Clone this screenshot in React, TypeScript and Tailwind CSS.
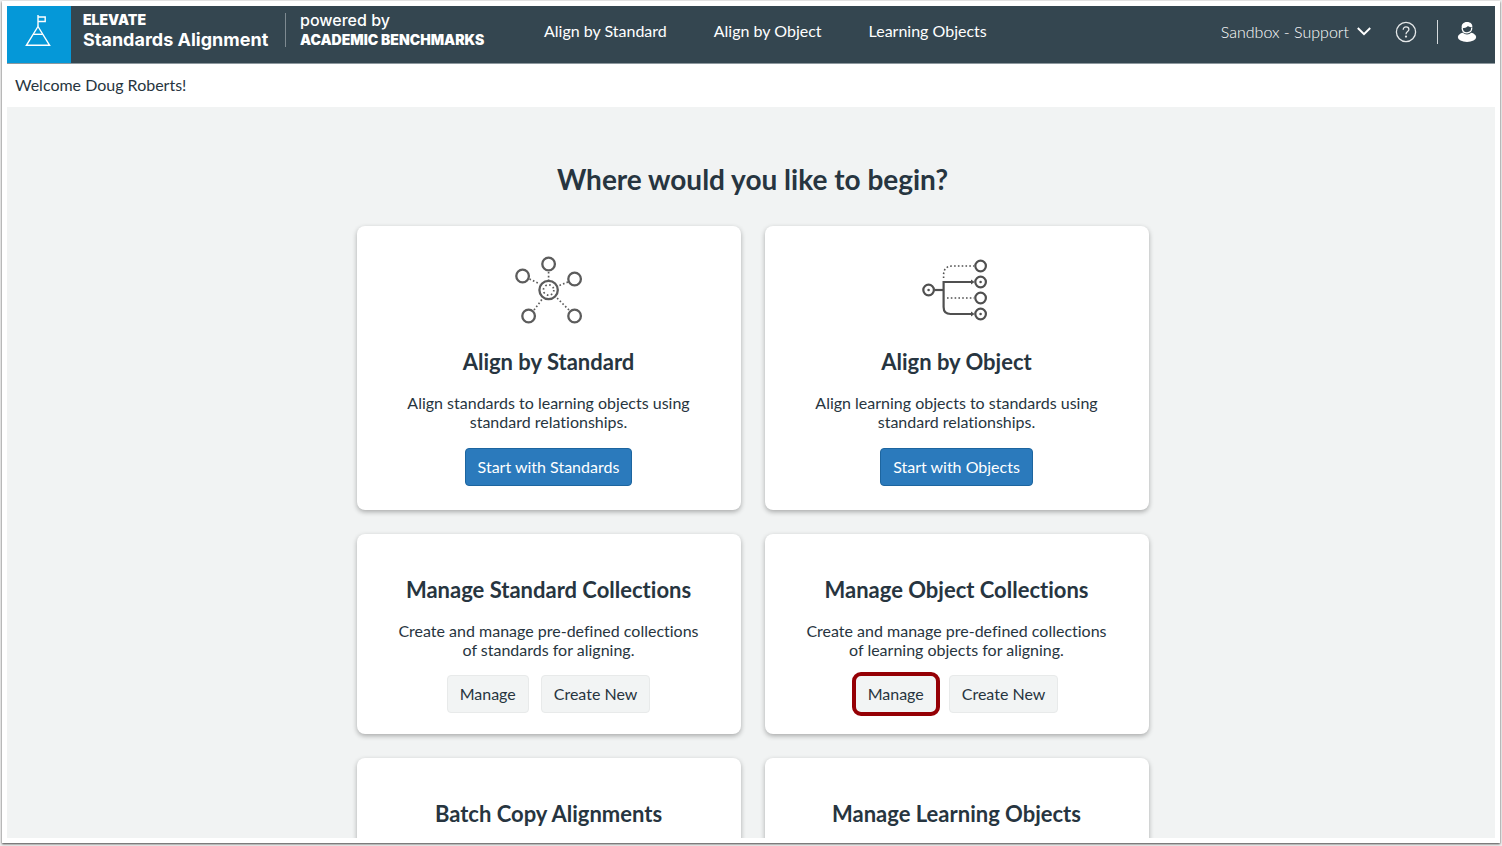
import type { ReactNode } from "react";

function LogoMark() {
  return (
    <svg width="26" height="34" viewBox="0 0 26 34" fill="none" stroke="#fff" strokeWidth="1.4" aria-hidden="true">
      <path d="M13 12.5 L24.6 31.3 H1.4 Z" />
      <path d="M13 12.5 V1" />
      <path d="M13 3 H20.2 V7.5 H13" />
      <path d="M8.2 20.3 H17.8" />
    </svg>
  );
}

function UserIcon() {
  return (
    <svg width="20" height="22" viewBox="0 0 20 22" aria-hidden="true">
      <ellipse cx="10" cy="16" rx="9.2" ry="5.1" fill="#fff" />
      <circle cx="10" cy="7" r="6.4" fill="#344650" />
      <path d="M4.8 7.2 C4 3.4 6.4 1 10 1 C13.6 1 15.8 3.2 15.3 6 C13.4 6.4 11.9 5.9 11 5 C9.4 6.6 7.2 7.3 4.8 7.2 Z" fill="#fff" />
      <path d="M5.2 7 C5.2 10.2 7.4 11.9 10 11.9 C12.6 11.9 14.8 10.2 14.8 6.6" fill="none" stroke="#fff" strokeWidth="1.3" />
    </svg>
  );
}

function HubIcon() {
  return (
    <svg width="80" height="80" viewBox="0 0 80 80" fill="none" stroke="#5c5c5c" aria-hidden="true">
      <g strokeWidth="2.3">
        <circle cx="39.6" cy="14" r="6.3" />
        <circle cx="13.6" cy="26" r="6.3" />
        <circle cx="65.6" cy="29" r="6.3" />
        <circle cx="19.6" cy="66" r="6.3" />
        <circle cx="65.6" cy="66" r="6.3" />
        <circle cx="39.6" cy="40" r="9.2" />
      </g>
      <circle cx="39.6" cy="40" r="5.2" strokeWidth="1.7" strokeDasharray="1.6 2.48" />
      <g strokeWidth="1.7" strokeDasharray="1.6 2.2">
        <path d="M39.6 22 V30" />
        <path d="M20.5 29 L31 34" />
        <path d="M59 32 L49 36" />
        <path d="M25 60 L34 48" />
        <path d="M60 60 L47 47" />
      </g>
    </svg>
  );
}

function TreeIcon() {
  return (
    <svg width="80" height="80" viewBox="0 0 80 80" fill="none" stroke="#505050" aria-hidden="true">
      <g strokeWidth="2.2">
        <circle cx="11.6" cy="40" r="5.3" />
        <circle cx="63.6" cy="16" r="5.3" />
        <circle cx="63.6" cy="32" r="5.3" />
        <circle cx="63.6" cy="48" r="5.3" />
        <circle cx="63.6" cy="64" r="5.3" />
        <path d="M17.5 40 H26.6" />
        <path d="M56 32 H26.6 V57 Q26.6 64 33.6 64 H56" />
      </g>
      <path d="M26.6 28 V25 Q26.6 16 35.6 16 H57 M30 48 H57" strokeWidth="1.6" strokeDasharray="1.6 2.2" />
      <g fill="#505050" stroke="none">
        <circle cx="11.6" cy="40" r="1.3" />
        <circle cx="63.6" cy="32" r="1.3" />
        <circle cx="63.6" cy="64" r="1.3" />
        <path d="M54 29.5 L57.6 32 L54 34.5 Z M54 61.5 L57.6 64 L54 66.5 Z" />
      </g>
    </svg>
  );
}

type CardProps = { title: string; lines: [string, string]; icon?: ReactNode; children?: ReactNode };

function Card({ title, lines, icon, children }: CardProps) {
  return (
    <section
      className={`flex flex-col items-center rounded-lg bg-white px-6 text-center shadow-[0_2px_5px_rgba(0,0,0,0.3)] ${
        icon ? "pt-6 pb-6" : "pt-[42px] pb-[21px]"
      }`}
    >
      {icon && <div className="mb-[18px]">{icon}</div>}
      <h2 className="text-[22px] leading-7 font-bold">{title}</h2>
      <p className="mt-[17px] leading-[19px]">
        {lines[0]}
        <br />
        {lines[1]}
      </p>
      <div className={`flex gap-3 ${icon ? "mt-[17px]" : "mt-4"}`}>{children}</div>
    </section>
  );
}

function PrimaryButton({ children }: { children: ReactNode }) {
  return (
    <button type="button" className="h-[38px] rounded border border-[#1d659f] bg-[#2b7abc] px-3 text-white">
      {children}
    </button>
  );
}

function PlainButton({ children, highlighted = false }: { children: ReactNode; highlighted?: boolean }) {
  return (
    <button
      type="button"
      className={`h-[38px] border border-[#e8eaea] bg-[#f2f4f4] px-3 ${
        highlighted ? "rounded-md outline-4 -outline-offset-1 outline-[#950005]" : "rounded"
      }`}
    >
      {children}
    </button>
  );
}

function ManageActions({ highlighted = false }: { highlighted?: boolean }) {
  return (
    <>
      <PlainButton highlighted={highlighted}>Manage</PlainButton>
      <PlainButton>Create New</PlainButton>
    </>
  );
}

export default function App() {
  return (
    <div className="h-screen bg-[#eeeeee] px-0.5 pt-px pb-[3px] font-['Lato',sans-serif] text-base text-[#273540] [font-variant-ligatures:none]">
      <div className="flex h-full flex-col bg-white p-[5px] shadow-[0_1px_2px_rgba(0,0,0,0.7)]">
        <header className="flex h-[58px] shrink-0 items-stretch border-b border-[#8d989e] bg-[#344650] text-white">
          <a href="#home" aria-label="Elevate home" className="flex w-16 items-start justify-center bg-[#0598d8] pt-2 pr-0.5">
            <LogoMark />
          </a>
          <div className="flex pl-3 font-['Inter',sans-serif]">
            <div className="flex w-[202px] flex-col pt-1 whitespace-nowrap">
              <span className="text-sm leading-5 font-black">ELEVATE</span>
              <span className="text-lg leading-5 font-bold">Standards Alignment</span>
            </div>
            <div className="mt-[7px] h-[34px] w-px bg-[#7e8a91]" />
            <div className="flex w-[258px] flex-col pt-1 pl-3.5 whitespace-nowrap">
              <span className="text-base leading-5 font-medium">powered by</span>
              <span className="text-sm leading-5 font-black">ACADEMIC BENCHMARKS</span>
            </div>
          </div>
          <nav className="flex gap-[47px] pt-[15px] leading-5 whitespace-nowrap">
            <a href="#standard">Align by Standard</a>
            <a href="#object">Align by Object</a>
            <a href="#learning">Learning Objects</a>
          </nav>
          <div className="ml-auto flex h-[51px] items-center pr-[18px]">
            <button type="button" className="flex items-center gap-2 font-light whitespace-nowrap">
              Sandbox - Support
              <svg width="14" height="9" viewBox="0 0 14 9" fill="none" stroke="#fff" strokeWidth="2" aria-hidden="true">
                <path d="M0.8 1 L7 7.2 L13.2 1" />
              </svg>
            </button>
            <button type="button" aria-label="Help" className="ml-6">
              <svg width="22" height="22" viewBox="0 0 22 22" fill="none" stroke="#e6e9ea" strokeWidth="1.3" aria-hidden="true">
                <circle cx="11" cy="11" r="9.6" />
                <path d="M8.2 8.8 C8.2 6.9 9.4 5.8 11 5.8 C12.7 5.8 13.9 6.9 13.9 8.4 C13.9 10.5 11 10.5 11 13.2" />
                <circle cx="11" cy="15.6" r="0.5" fill="#e6e9ea" />
              </svg>
            </button>
            <div className="ml-5 h-6 w-px bg-[#d5dadd]" />
            <button type="button" aria-label="Account" className="ml-[19px]">
              <UserIcon />
            </button>
          </div>
        </header>

        <p className="h-[43px] shrink-0 px-2 pt-[11px] leading-5">Welcome Doug Roberts!</p>

        <main className="min-h-0 flex-1 overflow-hidden bg-[#f1f3f3] pt-[54px] pl-[3px]">
          <h1 className="text-center text-[28px] leading-9 font-bold">Where would you like to begin?</h1>
          <div className="mx-auto mt-[29px] grid max-w-[792px] grid-cols-2 gap-6">
            <Card
              title="Align by Standard"
              lines={["Align standards to learning objects using", "standard relationships."]}
              icon={<HubIcon />}
            >
              <PrimaryButton>Start with Standards</PrimaryButton>
            </Card>
            <Card
              title="Align by Object"
              lines={["Align learning objects to standards using", "standard relationships."]}
              icon={<TreeIcon />}
            >
              <PrimaryButton>Start with Objects</PrimaryButton>
            </Card>
            <Card
              title="Manage Standard Collections"
              lines={["Create and manage pre-defined collections", "of standards for aligning."]}
            >
              <ManageActions />
            </Card>
            <Card
              title="Manage Object Collections"
              lines={["Create and manage pre-defined collections", "of learning objects for aligning."]}
            >
              <ManageActions highlighted />
            </Card>
            <section className="rounded-lg bg-white px-6 pt-[42px] pb-5 text-center shadow-[0_2px_5px_rgba(0,0,0,0.3)]">
              <h2 className="text-[22px] leading-7 font-bold">Batch Copy Alignments</h2>
            </section>
            <section className="rounded-lg bg-white px-6 pt-[42px] pb-5 text-center shadow-[0_2px_5px_rgba(0,0,0,0.3)]">
              <h2 className="text-[22px] leading-7 font-bold">Manage Learning Objects</h2>
            </section>
          </div>
        </main>
      </div>
    </div>
  );
}
